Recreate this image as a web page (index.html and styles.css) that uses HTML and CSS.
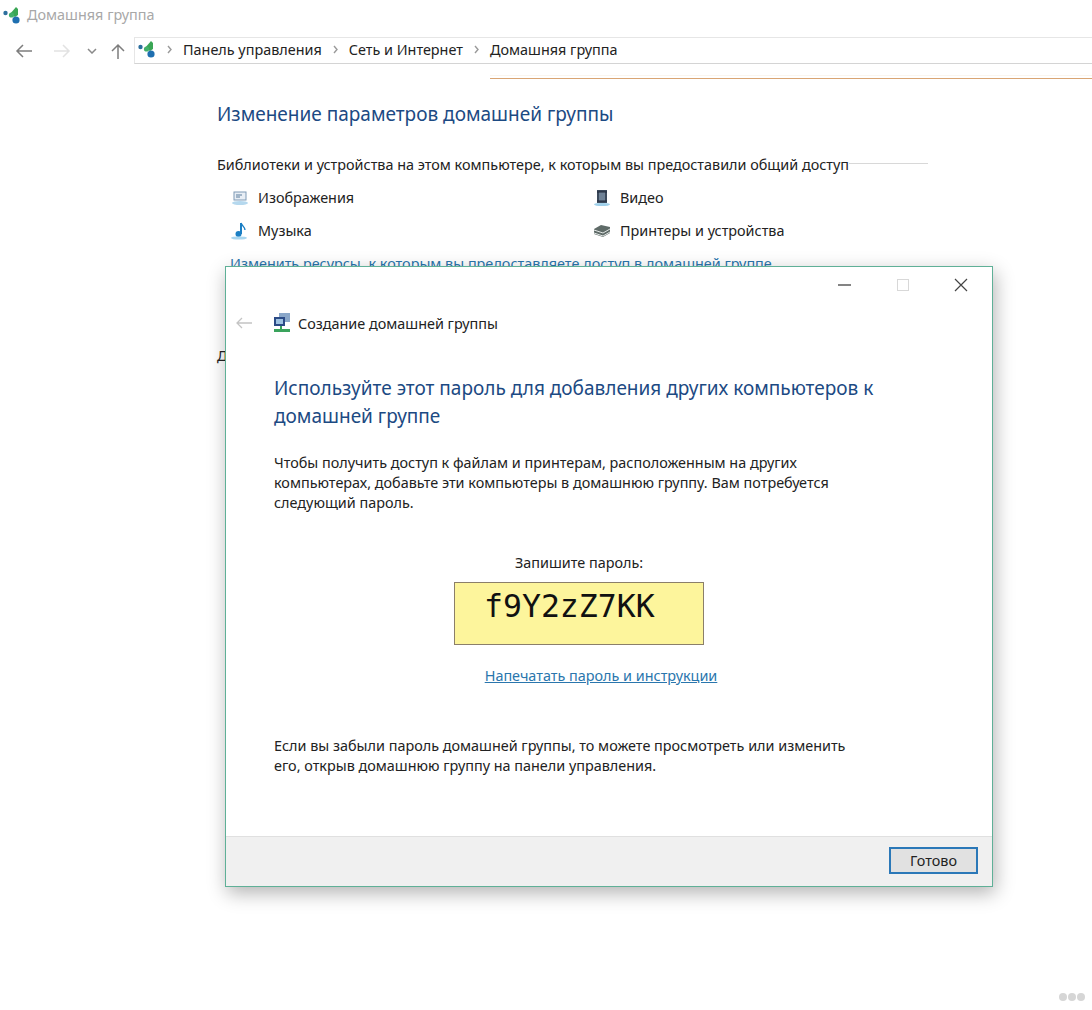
FILE: index.html
```html
<!DOCTYPE html>
<html>
<head>
    <meta name="viewport" content="width=device-width, initial-scale=1.0">
    <title>Домашняя группа</title>
    <link rel="stylesheet" href="styles.css">
</head>
<body>
    <svg class="defs" width="0" height="0">
        <symbol id="hg" viewBox="0 0 18 18">
            <circle cx="2.5" cy="7" r="2.2" fill="#2d6f9e"/>
            <path d="M13 1 L15 3 V9 L12 11 L7 8 Z" fill="#3aa655"/>
            <circle cx="13" cy="14" r="3.6" fill="#1f6fb0"/>
            <circle cx="8.5" cy="9" r="2.6" fill="#43b06a"/>
        </symbol>
        <symbol id="chev" viewBox="0 0 5 9">
            <path d="M1 1l3 3.5L1 8" fill="none" stroke="#9a9a9a" stroke-width="1.4"/>
        </symbol>
    </svg>

    <div class="titlebar">
        <svg class="hg-icon"><use href="#hg"/></svg>
        <span>Домашняя группа</span>
    </div>

    <div class="navbar">
        <div class="nav-buttons">
            <svg width="18" height="14" viewBox="0 0 18 14" class="nav-back"><path d="M17 7H2M8 1L2 7l6 6" fill="none" stroke="#7d7d7d" stroke-width="1.5"/></svg>
            <svg width="18" height="14" viewBox="0 0 18 14" class="nav-forward"><path d="M1 7h15M10 1l6 6-6 6" fill="none" stroke="#e2e2e2" stroke-width="1.5"/></svg>
            <svg width="10" height="6" viewBox="0 0 10 6" class="nav-down"><path d="M1 1l4 4 4-4" fill="none" stroke="#8a8a8a" stroke-width="1.5"/></svg>
            <svg width="14" height="16" viewBox="0 0 14 16" class="nav-up"><path d="M7 16V2M1 8l6-6 6 6" fill="none" stroke="#7d7d7d" stroke-width="1.5"/></svg>
        </div>
        <div class="address">
            <svg class="hg-icon"><use href="#hg"/></svg>
            <svg class="crumb-sep"><use href="#chev"/></svg>
            <span>Панель управления</span>
            <svg class="crumb-sep"><use href="#chev"/></svg>
            <span>Сеть и Интернет</span>
            <svg class="crumb-sep"><use href="#chev"/></svg>
            <span>Домашняя группа</span>
        </div>
    </div>
    <div class="orange-line"></div>

    <div class="content">
        <h1 class="page-title">Изменение параметров домашней группы</h1>
        <div class="section-head">
            <span>Библиотеки и устройства на этом компьютере, к которым вы предоставили общий доступ</span>
            <div class="section-rule"></div>
        </div>
        <div class="shares">
            <div class="share">
                <svg width="18" height="16" viewBox="0 0 18 16"><rect x="3" y="2" width="12" height="8" fill="#e8eef5" stroke="#7f9ab5"/><path d="M5 5h6M5 7h4" stroke="#5b7c9c"/><ellipse cx="9" cy="13" rx="8" ry="2" fill="#b5d8ee"/></svg>
                <span>Изображения</span>
            </div>
            <div class="share">
                <svg width="18" height="18" viewBox="0 0 18 18"><rect x="4" y="1" width="10" height="13" fill="#3c4a5c"/><rect x="6" y="3" width="6" height="9" fill="#6f8296"/><path d="M4 3h10M4 12h10" stroke="#20293a"/><ellipse cx="9" cy="15.5" rx="8" ry="1.6" fill="#9fd0ea"/></svg>
                <span>Видео</span>
            </div>
            <div class="share">
                <svg width="18" height="18" viewBox="0 0 18 18"><path d="M10 1v11" stroke="#1c7fc4" stroke-width="2"/><path d="M10 1c1 3 4 4 4 7" fill="none" stroke="#1c7fc4" stroke-width="1.4"/><circle cx="7.5" cy="12" r="3" fill="#1c7fc4"/><ellipse cx="8" cy="16" rx="8" ry="1.6" fill="#a9d6ef"/></svg>
                <span>Музыка</span>
            </div>
            <div class="share">
                <svg width="18" height="14" viewBox="0 0 18 14"><path d="M1 5l7-4 9 2v6l-7 4-9-3z" fill="#5f6b68"/><path d="M1 6l9 3 7-4M1 9l9 3 7-4" fill="none" stroke="#e2e6e5"/></svg>
                <span>Принтеры и устройства</span>
            </div>
        </div>
        <a class="change-link">Изменить ресурсы, к которым вы предоставляете доступ в домашней группе</a>
        <div class="other-head">Другие действия</div>
    </div>

    <div class="dialog">
        <div class="win-controls">
            <svg width="14" height="14" viewBox="0 0 14 14"><path d="M0 7h13" stroke="#333" stroke-width="1.2"/></svg>
            <svg width="14" height="14" viewBox="0 0 14 14"><rect x="1.5" y="1.5" width="11" height="11" fill="none" stroke="#d8d8d8"/></svg>
            <svg width="14" height="14" viewBox="0 0 14 14"><path d="M1 1l12 12M13 1L1 13" stroke="#444" stroke-width="1.2"/></svg>
        </div>
        <div class="wizard-head">
            <svg width="16" height="12" viewBox="0 0 16 12"><path d="M16 6H1M6 1L1 6l5 5" fill="none" stroke="#c4c4c4" stroke-width="1.3"/></svg>
            <svg width="18" height="20" viewBox="0 0 18 20"><rect x="6" y="0" width="11" height="9" fill="#8aa7c9"/><rect x="1" y="4" width="11" height="9" fill="#2b4a86"/><rect x="3" y="6" width="7" height="5" fill="#9fc2e2"/><path d="M8 13v3" stroke="#3aa35c" stroke-width="2"/><path d="M1 17.5h16" stroke="#3aa35c" stroke-width="3"/></svg>
            <span>Создание домашней группы</span>
        </div>
        <div class="wizard-body">
            <h2 class="wizard-title">Используйте этот пароль для добавления других компьютеров к домашней группе</h2>
            <p class="wizard-text">Чтобы получить доступ к файлам и принтерам, расположенным на других компьютерах, добавьте эти компьютеры в домашнюю группу. Вам потребуется следующий пароль.</p>
            <div class="password-block">
                <div>Запишите пароль:</div>
                <div class="password">f9Y2zZ7KK</div>
                <a class="print-link">Напечатать пароль и инструкции</a>
            </div>
            <p class="wizard-text forgot">Если вы забыли пароль домашней группы, то можете просмотреть или изменить его, открыв домашнюю группу на панели управления.</p>
        </div>
        <div class="wizard-foot">
            <button class="done">Готово</button>
        </div>
    </div>

    <div class="dots"><i></i><i></i><i></i></div>
</body>
</html>
```

FILE: styles.css
```css
html, body {
    height: 100%;
}
body {
    margin: 0;
    background: white;
    color: #222;
    font-family: "Noto Sans", sans-serif;
    font-size: 14.4px;
    overflow: hidden;
}
.defs {
    position: absolute;
}
.hg-icon {
    width: 18px;
    height: 18px;
    flex: none;
}
.titlebar {
    display: flex;
    align-items: center;
    gap: 6px;
    height: 29px;
    padding-left: 3px;
    color: #a8a8a8;
}
.navbar {
    display: flex;
    height: 27px;
    margin-top: 8px;
}
.nav-buttons {
    display: flex;
    align-items: center;
    width: 134px;
    flex: none;
    padding-left: 15px;
    box-sizing: border-box;
}
.nav-forward {
    margin-left: 20px;
}
.nav-down {
    margin-left: 16px;
}
.nav-up {
    margin-left: 14px;
}
.address {
    flex: 1;
    display: flex;
    align-items: center;
    gap: 11px;
    padding: 0 0 3px 3px;
    box-sizing: border-box;
    border: 1px solid #e6e6e6;
    border-right: none;
    border-bottom-color: #d4d4d4;
}
.crumb-sep {
    width: 5px;
    height: 9px;
    flex: none;
}
.orange-line {
    height: 1px;
    margin: 14px 0 0 490px;
    background: #d9a574;
    box-shadow: 0 -3px 0 #fbf6ef;
}
.content {
    width: 711px;
    margin: 22px 0 0 217px;
}
.page-title {
    margin: 0;
    color: #1c4a83;
    font-size: 19px;
    font-weight: 400;
    line-height: 26px;
}
.section-head {
    display: flex;
    margin-top: 28px;
    line-height: 20px;
}
.section-head span {
    white-space: nowrap;
}
.section-rule {
    flex: 1;
    height: 1px;
    margin-top: 8px;
    background: #d8d8d8;
}
.shares {
    display: grid;
    grid-template-columns: 362px 1fr;
    grid-auto-rows: 33px;
    margin: 6px 0 0 14px;
}
.share {
    display: flex;
    align-items: center;
    gap: 9px;
}
.change-link {
    display: block;
    margin: 7px 0 0 13px;
    color: #2a76ad;
    line-height: 20px;
    text-decoration: underline;
}
.other-head {
    margin-top: 72px;
    line-height: 20px;
}
.dialog {
    position: absolute;
    left: 225px;
    top: 266px;
    display: flex;
    flex-direction: column;
    width: 768px;
    height: 621px;
    box-sizing: border-box;
    background: white;
    border: 1px solid #5fb097;
    box-shadow: 2px 6px 18px rgba(0, 0, 0, 0.3);
}
.win-controls {
    display: flex;
    justify-content: flex-end;
    gap: 44px;
    padding: 11px 24px 0 0;
}
.wizard-head {
    display: flex;
    align-items: center;
    margin: 21px 0 0 10px;
    height: 20px;
}
.wizard-head svg:nth-child(2) {
    margin-left: 21px;
}
.wizard-head span {
    margin-left: 7px;
}
.wizard-body {
    flex: 1;
    padding: 0 48px;
}
.wizard-title {
    margin: 41px 0 0;
    width: 640px;
    color: #1c4a83;
    font-size: 19px;
    font-weight: 400;
    line-height: 28px;
}
.wizard-text {
    margin: 23px 0 0;
    width: 600px;
    line-height: 20px;
}
.password-block {
    display: flex;
    flex-direction: column;
    align-items: center;
    width: 610px;
    margin-top: 40px;
    line-height: 20px;
}
.password {
    width: 250px;
    height: 63px;
    margin-top: 9px;
    box-sizing: border-box;
    padding-left: 29px;
    background: #fdf59c;
    border: 1px solid #8b7f6a;
    color: #111;
    font-family: "DejaVu Sans Mono", monospace;
    font-size: 31.5px;
    line-height: 46px;
}
.print-link {
    margin: 21px 0 0 44px;
    color: #2a76ad;
    text-decoration: underline;
}
.forgot {
    margin-top: 50px;
}
.wizard-foot {
    display: flex;
    justify-content: flex-end;
    align-items: center;
    height: 50px;
    box-sizing: border-box;
    padding: 0 14px 2px 0;
    background: #f0f0f0;
    border-top: 1px solid #e0e0e0;
}
.done {
    width: 89px;
    height: 27px;
    background: #e1e1e1;
    border: 2px solid #2b78b8;
    color: #222;
    font-family: "Noto Sans", sans-serif;
    font-size: 14.4px;
}
.dots {
    position: absolute;
    right: 7px;
    bottom: 9px;
    display: flex;
    gap: 1px;
}
.dots i {
    width: 8px;
    height: 8px;
    border-radius: 50%;
    background: #d6d6d6;
}
```
